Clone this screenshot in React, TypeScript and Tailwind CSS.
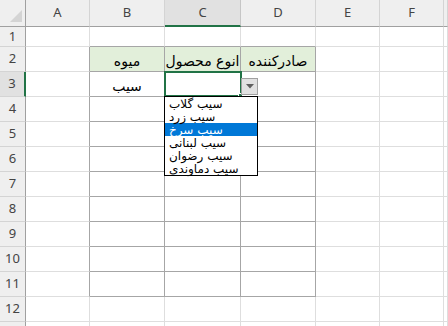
import React from 'react';

const cols = ['A', 'B', 'C', 'D', 'E', 'F', ''];
const rowCount = 13;

const cellText: Record<string, string> = {
  '2-2': 'میوه',
  '2-3': 'انوع محصول',
  '2-4': 'صادرکننده',
  '3-2': 'سیب',
};

const options = ['سیب گلاب', 'سیب زرد', 'سیب سرخ', 'سیب لبنانی', 'سیب رضوان', 'سیب دماوندی'];

const inTable = (r: number, c: number) => r >= 2 && r <= 11 && c >= 2 && c <= 4;

const Cell: React.FC<{ r: number; c: number }> = ({ r, c }) => {
  const rightDark = (r >= 2 && r <= 11 && c >= 1 && c <= 4);
  const bottomDark = (r >= 1 && r <= 11 && c >= 2 && c <= 4);
  const text = cellText[`${r}-${c}`];
  return (
    <div
      className={`flex items-center justify-center border-r border-b ${
        rightDark ? 'border-r-[#a6a6a6]' : 'border-r-[#dedede]'
      } ${bottomDark ? 'border-b-[#a6a6a6]' : 'border-b-[#dedede]'} ${
        r === 2 && inTable(r, c) ? 'bg-[#e2efda]' : 'bg-white'
      } text-[14px] text-black`}
      style={{ fontFamily: '"DejaVu Sans", sans-serif' }}
    >
      {text && <span dir="rtl" className="leading-none pt-1 whitespace-nowrap">{text}</span>}
    </div>
  );
};

export default function App() {
  return (
    <div className="relative w-[448px] h-[326px] overflow-hidden bg-white font-['Noto_Sans',sans-serif]">
      <div className="grid grid-cols-[26px_64px_75px_76px_75px_64px_64px_4px] grid-rows-[27px_20px_repeat(11,25px)_5px]">
        {/* Corner */}
        <div className="relative bg-[#efefef] border-r border-b border-r-[#a0a0a0] border-b-[#a0a0a0]">
          <div className="absolute left-[10px] top-[10px] w-[12px] h-[12px] bg-[#d4d4d4] [clip-path:polygon(100%_0,100%_100%,0_100%)]" />
        </div>

        {/* Column headers */}
        {cols.map((col, i) => (
          <div
            key={col + i}
            className={`flex items-center justify-center text-[13px] text-[#444] ${
              col === 'C'
                ? 'bg-[#e1e1e1] border-b-2 border-b-[#217346] border-r border-r-[#c6c6c6]'
                : 'bg-[#efefef] border-b border-b-[#a0a0a0] border-r border-r-[#d4d4d4]'
            }`}
          >
            {col}
          </div>
        ))}

        {Array.from({ length: rowCount }, (_, k) => {
          const r = k + 1;
          return (
            <React.Fragment key={r}>
              <div
                className={`flex items-center justify-center text-[13px] text-[#444] border-b border-b-[#d4d4d4] ${
                  r === 3
                    ? 'bg-[#e1e1e1] border-r-2 border-r-[#217346]'
                    : 'bg-[#efefef] border-r border-r-[#a0a0a0]'
                }`}
              >
                {r <= 12 ? r : ''}
              </div>
              {cols.map((_, ci) => (
                <Cell key={ci} r={r} c={ci + 1} />
              ))}
            </React.Fragment>
          );
        })}
      </div>

      {/* Active cell C3 */}
      <div className="absolute left-[164px] top-[71px] w-[78px] h-[26px] border-2 border-[#217346]" />
      <div className="absolute left-[238px] top-[93px] w-[5px] h-[5px] bg-[#217346] border border-white" />

      {/* Dropdown arrow button */}
      <div className="absolute left-[241px] top-[78px] w-[17px] h-[17px] border border-[#a0a0a0] bg-[#e1e1e1] flex items-center justify-center">
        <svg width="8" height="5" viewBox="0 0 8 5">
          <path d="M0 0 H8 L4 4.5 Z" fill="#5f5f5f" />
        </svg>
      </div>

      {/* Validation list */}
      <div
        className="absolute left-[164px] top-[96px] w-[94px] h-[80px] border border-black bg-white"
        style={{ fontFamily: '"DejaVu Sans", sans-serif' }}
      >
        {options.map((opt, i) => (
          <div
            key={opt}
            className={`h-[13px] pl-[4px] flex items-center text-[12px] leading-none ${
              i === 2 ? 'bg-[#0078d7] text-white' : 'text-black'
            }`}
          >
            <span dir="rtl">{opt}</span>
          </div>
        ))}
      </div>
    </div>
  );
}
